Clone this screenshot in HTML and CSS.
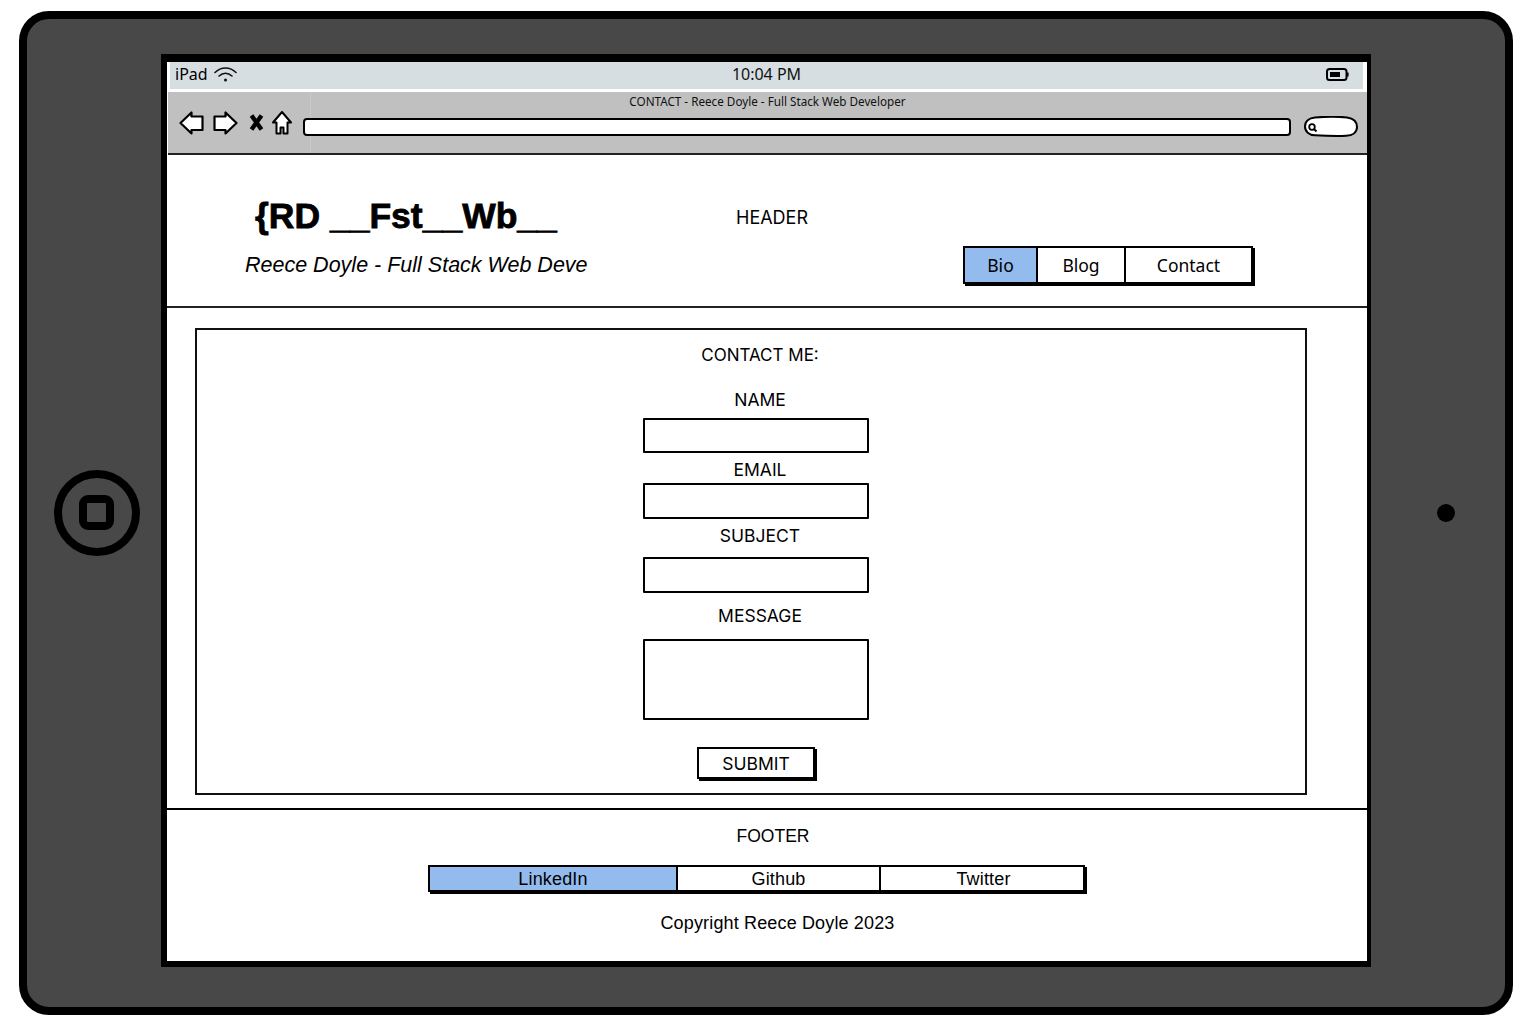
FILE: index.html
```html
<!DOCTYPE html>
<html lang="en">
<head>
    <meta charset="UTF-8">
    <meta name="viewport" content="width=device-width, initial-scale=1.0">
    <title>Contact wireframe</title>
    <link rel="stylesheet" href="styles.css">
</head>
<body>
    <div class="tablet">
        <svg class="home-button" width="86" height="86" viewBox="0 0 86 86">
            <circle cx="43" cy="43" r="39" fill="none" stroke="#000" stroke-width="8"/>
            <rect x="29" y="29" width="27" height="27" rx="5" fill="none" stroke="#000" stroke-width="8"/>
        </svg>

        <div class="screen">
            <div class="status-bar">
                <div class="status-left">
                    <span>iPad</span>
                    <svg width="23" height="15" viewBox="0 0 23 15" fill="none" stroke="#111" stroke-width="1.6" stroke-linecap="round">
                        <path d="M1 5.5C7 -0.5 16 -0.5 22 5.5"/>
                        <path d="M5 9C9 5.5 14 5.5 18 9"/>
                        <circle cx="11.5" cy="13" r="1.5" fill="#111" stroke="none"/>
                    </svg>
                </div>
                <div class="status-time">10:04 PM</div>
                <div class="status-right">
                    <svg width="23" height="13" viewBox="0 0 23 13">
                        <rect x="1" y="1" width="19.5" height="11" rx="2.5" fill="#d7dee2" stroke="#000" stroke-width="2"/>
                        <rect x="4" y="4" width="10" height="5" fill="#000"/>
                        <rect x="21" y="4.5" width="1.6" height="4" fill="#000"/>
                    </svg>
                </div>
            </div>

            <div class="browser-bar">
                <div class="browser-nav">
                    <svg class="nav-back" width="25" height="24" viewBox="0 0 25 24">
                        <path d="M1.5 12L12.5 1.5V5.5H23.5V19H12.5V22.5Z" fill="#fff" stroke="#000" stroke-width="2.2" stroke-linejoin="round"/>
                    </svg>
                    <svg class="nav-forward" width="25" height="24" viewBox="0 0 25 24">
                        <path d="M23.5 12L12.5 1.5V5.5H1.5V19H12.5V22.5Z" fill="#fff" stroke="#000" stroke-width="2.2" stroke-linejoin="round"/>
                    </svg>
                    <svg class="nav-stop" width="15" height="24" viewBox="0 0 15 24">
                        <path d="M2.5 4.5L12.5 18.5M12.5 4.5L2.5 18.5" fill="none" stroke="#000" stroke-width="4.4"/>
                    </svg>
                    <svg class="nav-house" width="20" height="24" viewBox="0 0 20 24">
                        <path d="M10 1L19 11.5H15.5V22.5H11.5V16.5H8.5V22.5H4.5V11.5H1Z" fill="#fff" stroke="#000" stroke-width="2" stroke-linejoin="round"/>
                    </svg>
                </div>
                <div class="browser-main">
                    <div class="tab-title">CONTACT - Reece Doyle - Full Stack Web Developer</div>
                    <div class="browser-controls">
                        <div class="url-bar"></div>
                        <svg class="search-pill" width="54" height="21" viewBox="0 0 54 21">
                            <path d="M11 1.5C22 0.5 35 0.5 43 1.5C50 2.5 53 6 53 11C53 16 49 19.5 42 19.8C32 20.3 20 19.8 11 19.3C5 19 1 15.5 1 10.5C1 5.5 5 2 11 1.5Z" fill="#fff" stroke="#000" stroke-width="2"/>
                            <circle cx="8" cy="11" r="2.8" fill="none" stroke="#000" stroke-width="1.8"/>
                            <path d="M10 13L12.5 15.5" stroke="#000" stroke-width="2"/>
                        </svg>
                    </div>
                </div>
            </div>

            <header class="site-header">
                <div class="logo">{RD __Fst__Wb__</div>
                <div class="region-label">HEADER</div>
                <div class="tagline">Reece Doyle - Full Stack Web Deve</div>
                <nav class="tabs header-tabs">
                    <a class="tab active tab-bio">Bio</a>
                    <a class="tab tab-blog">Blog</a>
                    <a class="tab tab-contact">Contact</a>
                </nav>
            </header>

            <main class="site-main">
                <section class="contact-card">
                    <h2 class="contact-title">CONTACT ME:</h2>
                    <form class="contact-form">
                        <label class="field-label label-name" for="name">NAME</label>
                        <input class="field input-name" type="text" id="name">
                        <label class="field-label label-email" for="email">EMAIL</label>
                        <input class="field input-email" type="text" id="email">
                        <label class="field-label label-subject" for="subject">SUBJECT</label>
                        <input class="field input-subject" type="text" id="subject">
                        <label class="field-label label-message" for="message">MESSAGE</label>
                        <textarea class="field input-message" id="message"></textarea>
                        <button class="submit-btn" type="button">SUBMIT</button>
                    </form>
                </section>
            </main>

            <footer class="site-footer">
                <div class="footer-label">FOOTER</div>
                <nav class="tabs footer-tabs">
                    <a class="tab active tab-linkedin">LinkedIn</a>
                    <a class="tab tab-github">Github</a>
                    <a class="tab tab-twitter">Twitter</a>
                </nav>
                <div class="copyright">Copyright Reece Doyle 2023</div>
            </footer>
        </div>

        <div class="camera-dot"></div>
    </div>
</body>
</html>
```

FILE: styles.css
```css
* {
    box-sizing: border-box;
}
body {
    margin: 0;
    padding: 11px 0 0 19px;
    background-color: #fff;
    color: #000;
    font-family: "Noto Sans", Arial, sans-serif;
    font-size: 17.5px;
}
.tablet {
    display: flex;
    width: 1494px;
    height: 1004px;
    background-color: #484848;
    border: 8px solid #000;
    border-radius: 30px;
}
.home-button {
    flex: none;
    align-self: center;
    margin: 0 21px 0 27px;
}
.camera-dot {
    flex: none;
    align-self: center;
    width: 18px;
    height: 18px;
    margin-left: 66px;
    background-color: #000;
    border-radius: 50%;
}
.screen {
    flex: none;
    display: flex;
    flex-direction: column;
    width: 1210px;
    height: 913px;
    margin-top: 35px;
    background-color: #fff;
    border: solid #000;
    border-width: 8px 4px 6px 6px;
}

/* status bar */
.status-bar {
    display: grid;
    grid-template-columns: 1fr auto 1fr;
    align-items: center;
    height: 27px;
    margin: 0 4px 3px 3px;
    padding: 0 14px 3px 5px;
    background-color: #d7dee2;
    font-size: 16px;
}
.status-left {
    display: flex;
    align-items: center;
    gap: 6px;
}
.status-time {
    margin-left: 9px;
    color: #111;
}
.status-right {
    display: flex;
    justify-content: flex-end;
}

/* browser chrome */
.browser-bar {
    position: relative;
    display: flex;
    height: 63px;
    margin-left: 1px;
    background-color: #c0c0c0;
    border-bottom: 2px solid #222;
}
.browser-bar::before {
    content: "";
    position: absolute;
    top: 0;
    bottom: 0;
    left: 142px;
    width: 1px;
    background-color: #c9c9c9;
}
.browser-nav {
    flex: none;
    display: flex;
    width: 135px;
    height: 24px;
    margin-top: 19px;
    padding-left: 11px;
}
.nav-forward {
    margin-left: 9px;
}
.nav-stop {
    margin-left: 11px;
}
.nav-house {
    margin-left: 8px;
}
.browser-main {
    flex: 1;
}
.tab-title {
    height: 14px;
    margin: 2px 135px 0 0;
    font-size: 11.7px;
    line-height: 14px;
    text-align: center;
    color: #111;
}
.browser-controls {
    display: flex;
    align-items: center;
    margin-top: 8px;
}
.url-bar {
    position: relative;
    width: 988px;
    height: 18px;
    background-color: #fff;
    border: 2px solid #000;
    border-radius: 4px;
}
.search-pill {
    flex: none;
    margin-left: 13px;
}

/* header */
.site-header {
    display: grid;
    grid-template-columns: 491px 227px 290px;
    grid-template-rows: 28px 38px;
    row-gap: 16px;
    align-items: center;
    height: 153px;
    padding: 47px 0 0 78px;
    border-bottom: 2px solid #222;
}
.logo {
    padding-left: 10px;
    font-family: "Liberation Sans", Arial, sans-serif;
    font-size: 35.5px;
    font-weight: 700;
    line-height: 28px;
    white-space: nowrap;
    -webkit-text-stroke: 0.8px #000;
}
.region-label {
    grid-column: 2 / 4;
    padding-top: 2px;
    font-family: Inter, Arial, sans-serif;
    font-size: 18px;
}
.tagline {
    grid-column: 1;
    font-family: "Liberation Sans", Arial, sans-serif;
    font-size: 21.5px;
    font-style: italic;
    white-space: nowrap;
}

/* tab strips */
.tabs {
    display: flex;
    background-color: #fff;
    border: 2px solid #000;
    box-shadow: 2px 2px 0 #000;
}
.tab {
    display: flex;
    align-items: center;
    justify-content: center;
    border-left: 2px solid #000;
}
.tab:first-child {
    border-left: 0;
}
.tab.active {
    background-color: #93bbee;
}
.header-tabs {
    grid-column: 3;
    width: 290px;
    height: 38px;
}
.tab-bio {
    width: 71px;
}
.tab-blog {
    width: 88px;
}
.tab-contact {
    flex: 1;
}

/* main */
.site-main {
    height: 500px;
    padding: 20px 0 0 28px;
}
.contact-card {
    display: flex;
    flex-direction: column;
    align-items: center;
    width: 1112px;
    height: 467px;
    padding: 15px 0 0 18px;
    border: 2px solid #111;
    font-family: Inter, Arial, sans-serif;
    font-size: 17.5px;
}
.contact-title {
    margin: 0;
    font-size: 17px;
    font-weight: 400;
    line-height: 20px;
}
.contact-form {
    display: flex;
    flex-direction: column;
    align-items: center;
}
.field-label {
    line-height: 20px;
}
.field {
    display: block;
    width: 226px;
    margin-right: 8px;
    padding: 0;
    background-color: #fff;
    border: 2px solid #000;
    border-radius: 1px;
    resize: none;
}
.label-name {
    margin: 25px 0 8px;
}
.input-name {
    height: 35px;
}
.label-email {
    margin: 7px 0 3px;
}
.input-email {
    height: 36px;
}
.label-subject {
    margin: 7px 0 11px;
}
.input-subject {
    height: 36px;
}
.label-message {
    margin: 13px 0 13px;
}
.input-message {
    height: 81px;
}
.submit-btn {
    width: 118px;
    height: 32px;
    margin: 27px 8px 0 0;
    padding: 0;
    background-color: #fff;
    border: 2px solid #000;
    box-shadow: 2px 2px 0 #000;
    color: #000;
    font-family: Inter, Arial, sans-serif;
    font-size: 17.5px;
}

/* footer */
.site-footer {
    display: flex;
    flex-direction: column;
    align-items: center;
    flex: 1;
    padding-top: 16px;
    border-top: 2px solid #000;
    font-family: "Liberation Sans", Arial, sans-serif;
    font-size: 18px;
}
.footer-label {
    margin-left: 12px;
    font-size: 17.5px;
    line-height: 20px;
}
.footer-tabs {
    width: 657px;
    height: 27px;
    margin: 19px 21px 0 0;
    letter-spacing: 0.15px;
}
.tab-linkedin {
    width: 246px;
}
.tab-github {
    width: 203px;
}
.tab-twitter {
    flex: 1;
    padding-left: 3px;
}
.tab-linkedin, .tab-github, .tab-twitter {
    padding-top: 1px;
}
.copyright {
    margin: 21px 0 0 21px;
    letter-spacing: 0.15px;
    line-height: 20px;
}
```
